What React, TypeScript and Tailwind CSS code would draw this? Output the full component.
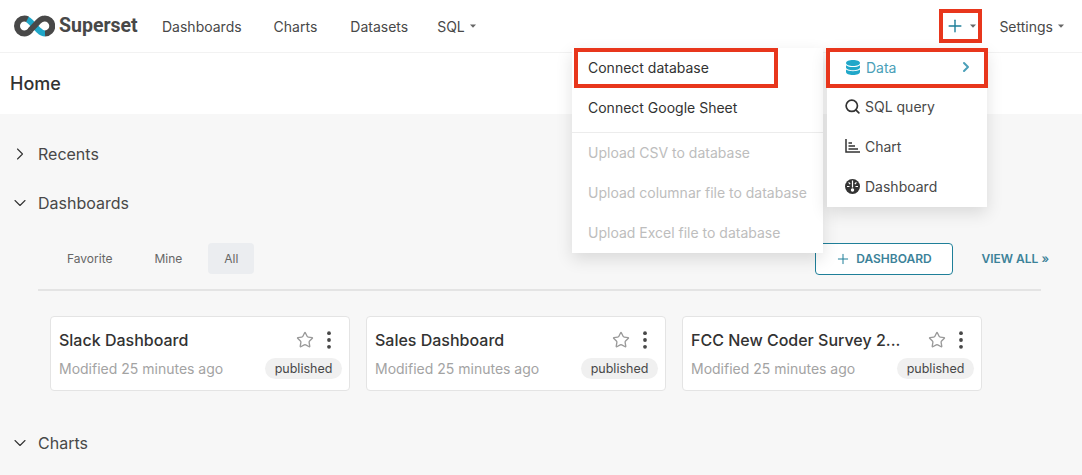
import React from "react";
import { ChevronRight, ChevronDown, Plus, Search, Star } from "lucide-react";

const Caret = ({ c = "#666" }: { c?: string }) => (
  <svg width="6" height="4" viewBox="0 0 6 4" className="ml-[5px]"><path d="M0 0.5h6L3 3.8z" fill={c} /></svg>
);

const Logo = () => (
  <svg width="41" height="22" viewBox="0 0 41 22" fill="none">
    <path d="M13 4.2C14.5 4.8 15.5 5.8 16.5 6.8L25 15.5C27 17.4 29 18.5 31 18.5" stroke="#20a7c9" strokeWidth="6" />
    <path d="M16.5 15.5C14.5 17.5 12.6 18.5 10.5 18.5A7.5 7.5 0 0 1 10.5 3.5C11.5 3.5 12.5 3.7 13.5 4.2" stroke="#484848" strokeWidth="6" />
    <path d="M31 18.5A7.5 7.5 0 0 0 30.5 3.5C28.4 3.5 26.5 4.5 24.5 6.5L16 15.5" stroke="#484848" strokeWidth="6" />
  </svg>
);

const Kebab = () => (
  <svg width="4" height="18" viewBox="0 0 4 18" fill="#484848"><circle cx="2" cy="2.2" r="1.9" /><circle cx="2" cy="9" r="1.9" /><circle cx="2" cy="15.8" r="1.9" /></svg>
);

const DbIcon = () => (
  <svg width="14" height="15" viewBox="0 0 14 15" fill="#20a7c9">
    <path d="M0 3C0 1.3 3.1 0 7 0s7 1.3 7 3-3.1 3-7 3-7-1.3-7-3z" />
    <path d="M0 5.2C1.5 6.5 4.1 7 7 7s5.5-.5 7-1.8V7.5c0 1.6-3.1 2.7-7 2.7s-7-1.1-7-2.7z" />
    <path d="M0 9.6c1.5 1.2 4.1 1.7 7 1.7s5.5-.5 7-1.7V12c0 1.7-3.1 3-7 3s-7-1.3-7-3z" />
  </svg>
);

const ChartIcon = () => (
  <svg width="15" height="14" viewBox="0 0 15 14" fill="none" stroke="#333" strokeWidth="1.5">
    <path d="M1 0V13H15" /><path d="M3.5 4H7M3.5 7H10M3.5 10H13" />
  </svg>
);

const DashIcon = () => (
  <svg width="15" height="15" viewBox="0 0 15 15">
    <circle cx="7.5" cy="7.5" r="7.5" fill="#333" />
    <path d="M7.5 1.5v7M2 7.5h2.5M10.5 7.5H13M3.6 3.4l1.6 1.7M11.4 3.4L9.8 5.1" stroke="#fff" strokeWidth="1.2" />
    <circle cx="7.5" cy="11" r="1.7" fill="#fff" />
  </svg>
);

const Section = ({ open, label }: { open: boolean; label: string }) => (
  <div className="flex items-center h-[22px] text-[16px] text-[#484848]">
    <span className="w-[38px] pl-[10px]">
      {open ? <ChevronDown size={20} strokeWidth={1.3} color="#333" /> : <ChevronRight size={20} strokeWidth={1.3} color="#333" />}
    </span>
    {label}
  </div>
);

const Card = ({ title }: { title: string }) => (
  <div className="w-[300px] h-[75px] bg-white border border-[#e4e4e4] rounded-[4px] px-[8px] pt-[12px] flex flex-col">
    <div className="flex items-center justify-between h-[22px]">
      <span className="text-[16px] text-[#323232] font-medium leading-[22px]">{title}</span>
      <span className="flex items-center gap-[13px] pr-[10px]">
        <Star size={18} strokeWidth={1.8} color="#9a9a9a" />
        <Kebab />
      </span>
    </div>
    <div className="flex items-center justify-between mt-[6px] h-[22px]">
      <span className="text-[14px] text-[#a3a3a3]">Modified 25 minutes ago</span>
      <span className="h-[21px] w-[77px] text-center rounded-full bg-[#f0f0f0] text-[12.5px] text-[#484848] leading-[21px] -mr-[1px]">published</span>
    </div>
  </div>
);

export default function App() {
  const font = { fontFamily: "Inter, 'Noto Sans', sans-serif" };
  return (
    <div style={font} className="relative w-[1082px] h-[475px] overflow-hidden bg-[#f7f7f7]">
      <nav className="h-[53px] bg-white border-b border-[#f2f2f2] flex items-center text-[14px] text-[#484848]">
        <div className="flex items-center pl-[14px] w-[162px]">
          <Logo />
          <span style={{ fontFamily: "Roboto, sans-serif" }} className="ml-[4px] text-[19.5px] font-bold text-[#484848] leading-none">Superset</span>
        </div>
        <div className="flex items-center">
          <span>Dashboards</span>
          <span className="ml-[32px]">Charts</span>
          <span className="ml-[33px]">Datasets</span>
          <span className="ml-[29px] flex items-center">SQL<Caret /></span>
        </div>
        <div className="ml-auto flex items-center pr-[18px]">
          <div className="w-[43px] h-[34px] border-[4px] border-[#e8361c] flex items-center justify-center mr-[17px]">
            <Plus size={20} strokeWidth={1.7} color="#1f7f99" className="-ml-[1px]" />
            <Caret />
          </div>
          <span className="flex items-center">Settings<Caret /></span>
        </div>
      </nav>
      <div className="h-[61px] bg-white flex items-center pl-[10px] text-[18px] font-medium text-[#323232]">Home</div>

      <div className="pt-[29px]">
        <Section open={false} label="Recents" />
        <div className="mt-[27px]"><Section open label="Dashboards" /></div>
        <div className="pl-[38px] pr-[41px] mt-[29px]">
          <div className="flex items-center justify-between border-b-2 border-[#e4e4e4] pb-[15px] box-content h-[31px]">
            <div className="flex items-center text-[12px] text-[#666] pl-[12px]">
              <span className="px-[17px]">Favorite</span>
              <span className="px-[25px]">Mine</span>
              <span className="w-[46px] h-[31px] rounded-[4px] bg-[#ebedf0] flex items-center justify-center ml-[1px]">All</span>
            </div>
            <div className="flex items-center -mr-[8px]">
              <button className="w-[138px] h-[32px] border border-[#1f7f99] rounded-[4px] bg-white flex items-center justify-center text-[12px] font-semibold text-[#3c8299]">
                <Plus size={16} strokeWidth={1.5} className="mr-[5px] -ml-[2px]" color="#1f7f99" />DASHBOARD
              </button>
              <span className="ml-[28px] text-[12px] font-semibold text-[#3c8299]">VIEW ALL »</span>
            </div>
          </div>
          <div className="flex gap-[16px] pl-[12px] mt-[25px]">
            <Card title="Slack Dashboard" />
            <Card title="Sales Dashboard" />
            <Card title="FCC New Coder Survey 2..." />
          </div>
        </div>
        <div className="mt-[41px]"><Section open label="Charts" /></div>
      </div>

      {/* Data submenu */}
      <div className="absolute left-[572px] top-[48px] w-[251px] h-[205px] bg-white shadow-[0_6px_16px_rgba(0,0,0,0.12)] text-[14px]">
        <div className="relative h-[40px] flex items-center pl-[16px] pb-[2px] text-[#323232]">
          <div className="absolute left-[2px] top-0 w-[204px] h-[40px] border-[4px] border-[#e8361c]" />
          Connect database
        </div>
        <div className="h-[40px] flex items-center pl-[16px] pb-[2px] text-[#323232]">Connect Google Sheet</div>
        <div className="h-px bg-[#ececec] mt-[4px] mb-0" />
        <div className="h-[40px] flex items-center pl-[16px] pb-[2px] text-[#bdbdbd]">Upload CSV to database</div>
        <div className="h-[40px] flex items-center pl-[16px] pb-[2px] text-[#bdbdbd]">Upload columnar file to database</div>
        <div className="h-[40px] flex items-center pl-[16px] pb-[2px] text-[#bdbdbd]">Upload Excel file to database</div>
      </div>

      {/* Plus menu */}
      <div className="absolute left-[827px] top-[48px] w-[160px] h-[159px] bg-white shadow-[0_6px_16px_rgba(0,0,0,0.12)] text-[14px] text-[#484848]">
        <div className="relative h-[40px] flex items-center pl-[19px] pb-[2px] text-[#4a9fb8]">
          <div className="absolute -left-[1px] top-0 w-[162px] h-[40px] border-[4px] border-[#e8361c]" />
          <span className="mr-[6px]"><DbIcon /></span>
          Data
          <ChevronRight size={16} strokeWidth={3} color="#4a9fb8" className="ml-auto mr-[13px]" />
        </div>
        <div className="h-[40px] flex items-center pl-[17px] pb-[2px] -mt-[1px]"><Search size={17} strokeWidth={2.4} color="#333" className="mr-[4px]" />SQL query</div>
        <div className="h-[40px] flex items-center pl-[18px] pb-[2px]"><span className="mr-[5px]"><ChartIcon /></span>Chart</div>
        <div className="h-[40px] flex items-center pl-[18px] pb-[2px]"><span className="mr-[5px]"><DashIcon /></span>Dashboard</div>
      </div>
    </div>
  );
}
